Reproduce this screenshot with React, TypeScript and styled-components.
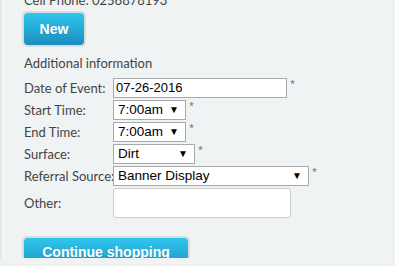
import styled, { createGlobalStyle } from "styled-components";

const GlobalStyle = createGlobalStyle`
  html, body {
    margin: 0;
    padding: 0;
    background: #f0f3f4;
  }
  body {
    font-family: "Open Sans", "Noto Sans", sans-serif;
    overflow: hidden;
  }
`;

const Page = styled.div`
  height: 266px;
  border-left: 2px solid #e2e6e8;
  box-shadow: inset 1px 0 0 #fafbfb;
  padding-left: 20px;
  box-sizing: border-box;
`;

const InfoLine = styled.div`
  margin-top: -8px;
  padding-left: 2px;
  height: 16px;
  font-family: "Lato", "Open Sans", sans-serif;
  font-size: 13px;
  line-height: 16px;
  color: #444;
  white-space: nowrap;
`;

const ButtonRing = styled.div<{ $width: number }>`
  display: inline-block;
  width: ${(p) => p.$width}px;
  padding: 2px;
  border-radius: 5px;
  background: #d9dde0;
  box-sizing: border-box;
`;

const BlueButton = styled.button<{ $height: number; $bottom?: number }>`
  display: block;
  width: 100%;
  height: ${(p) => p.$height}px;
  border: 0;
  border-radius: 4px;
  background: linear-gradient(#2fc6ef, #1c8dbd);
  color: #fff;
  font-family: "Liberation Sans", Arial, sans-serif;
  font-weight: bold;
  font-size: 14px;
  padding: 0 0 ${(p) => p.$bottom ?? 0}px;
  white-space: nowrap;
  text-shadow: 0 1px 0 rgba(0, 0, 0, 0.15);
`;

const TopBar = styled.div`
  margin-top: 3px;
`;

const Section = styled.div`
  margin-top: 8px;
  padding-left: 2px;
`;

const SectionTitle = styled.div`
  font-family: "Lato", "Open Sans", sans-serif;
  font-size: 13px;
  line-height: 16px;
  color: #444;
  margin-bottom: 7px;
`;

const FormGrid = styled.div`
  display: grid;
  grid-template-columns: 89px auto;
  row-gap: 2px;
  align-items: center;
`;

const Label = styled.label`
  font-family: "Lato", "Open Sans", sans-serif;
  font-size: 13px;
  color: #444;
  line-height: 16px;
  white-space: nowrap;
`;

const Field = styled.div`
  display: flex;
  align-items: flex-start;
`;

const TextInput = styled.div<{ $width: number }>`
  width: ${(p) => p.$width}px;
  height: 20px;
  box-sizing: border-box;
  border: 1px solid #a9a9a9;
  background: #fff;
  font-family: "Liberation Sans", Arial, sans-serif;
  font-size: 13px;
  line-height: 18px;
  padding-left: 2px;
  color: #000;
`;

const Select = styled.div<{ $width: number }>`
  width: ${(p) => p.$width}px;
  height: 20px;
  box-sizing: border-box;
  border: 1px solid #a9a9a9;
  background: #fff;
  font-family: "Liberation Sans", Arial, sans-serif;
  font-size: 13.5px;
  line-height: 18px;
  padding-left: 4px;
  padding-right: 6px;
  color: #000;
  display: flex;
  justify-content: space-between;
`;

const Arrow = styled.span`
  font-size: 10px;
  line-height: 18px;
`;

const Star = styled.span`
  font-size: 9px;
  color: #666;
  margin-left: 3px;
  line-height: 12px;
`;

const TextArea = styled.div`
  width: 178px;
  height: 30px;
  box-sizing: border-box;
  border: 1px solid #cfcdc8;
  border-radius: 3px;
  background: #fff;
`;

const OtherLabel = styled(Label)`
  align-self: start;
  padding-top: 7px;
`;

const Footer = styled.div`
  margin-top: 18px;
`;

export default function App() {
  const selects = [
    { label: "Start Time:", value: "7:00am", width: 73 },
    { label: "End Time:", value: "7:00am", width: 73 },
    { label: "Surface:", value: "Dirt", width: 82 },
    { label: "Referral Source:", value: "Banner Display", width: 196 },
  ];

  return (
    <>
      <GlobalStyle />
      <Page>
        <InfoLine>Cell Phone: 0256878193</InfoLine>
        <TopBar>
          <ButtonRing $width={64}>
            <BlueButton $height={32}>New</BlueButton>
          </ButtonRing>
        </TopBar>
        <Section>
          <SectionTitle>Additional information</SectionTitle>
          <FormGrid>
            <Label>Date of Event:</Label>
            <Field>
              <TextInput $width={174}>07-26-2016</TextInput>
              <Star>*</Star>
            </Field>
            {selects.map((s) => (
              <>
                <Label key={s.label + "l"}>{s.label}</Label>
                <Field key={s.label}>
                  <Select $width={s.width}>
                    <span>{s.value}</span>
                    <Arrow>▼</Arrow>
                  </Select>
                  <Star>*</Star>
                </Field>
              </>
            ))}
            <OtherLabel>Other:</OtherLabel>
            <Field>
              <TextArea />
            </Field>
          </FormGrid>
        </Section>
        <Footer>
          <ButtonRing $width={168}>
            <BlueButton $height={34} $bottom={6}>Continue shopping</BlueButton>
          </ButtonRing>
        </Footer>
      </Page>
    </>
  );
}
